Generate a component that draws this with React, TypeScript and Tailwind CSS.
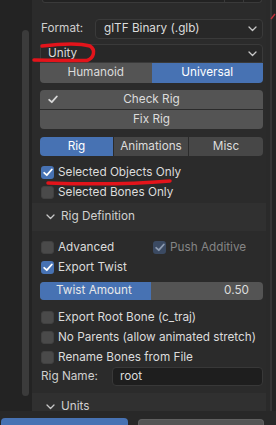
import React from 'react'

// small chevron used by dropdowns and sub-panel headers
const Chevron = ({ className = '' }: { className?: string }) => (
  <svg width="9" height="6" viewBox="0 0 9 6" className={className}>
    <path d="M1 1 L4.5 4.5 L8 1" fill="none" stroke="#c8c8c8" strokeWidth="1.3" strokeLinecap="round" strokeLinejoin="round" />
  </svg>
)

const Tick = ({ color = '#ffffff' }: { color?: string }) => (
  <svg width="10" height="9" viewBox="0 0 10 9">
    <path d="M1.2 4.8 L3.8 7.2 L8.8 1.5" fill="none" stroke={color} strokeWidth="1.8" strokeLinecap="round" strokeLinejoin="round" />
  </svg>
)

const Checkbox = ({ checked = false, dim = false }: { checked?: boolean; dim?: boolean }) => {
  if (checked && dim) {
    return (
      <span className="w-[13px] h-[13px] rounded-[3px] bg-[#3b4a62] flex items-center justify-center shrink-0">
        <Tick color="#8d9bb0" />
      </span>
    )
  }
  if (checked) {
    return (
      <span className="w-[13px] h-[13px] rounded-[3px] bg-[#4772b3] flex items-center justify-center shrink-0">
        <Tick />
      </span>
    )
  }
  return <span className="w-[13px] h-[13px] rounded-[3px] bg-[#4a4a4a] border border-[#414141] shrink-0" />
}

const CheckRow = ({ label, checked = false }: { label: string; checked?: boolean }) => (
  <div className="h-[20px] flex items-center gap-[4px] pl-[1px]">
    <Checkbox checked={checked} />
    <span className="text-[11.75px] text-[#dcdcdc] pt-[1px]">{label}</span>
  </div>
)

const SubHeader = ({ label }: { label: string }) => (
  <div className="h-[28px] bg-[#303030] flex items-center pl-[14px] gap-[6px] shrink-0">
    <Chevron />
    <span className="text-[11.75px] text-[#d0d0d0]">{label}</span>
  </div>
)

export default function App() {
  return (
    <div
      className="relative w-[276px] h-[425px] overflow-hidden bg-[#232323] flex flex-col"
      style={{ fontFamily: 'Inter, "Noto Sans", sans-serif' }}
    >
      <div className="flex h-[411px]">
        {/* left strip with scrollbar */}
        <div className="w-[32px] shrink-0 pl-[22px]">
          <div className="w-[7px] h-[366px] mt-[30px] rounded-full bg-[#3b3b3b]" />
        </div>

        {/* main panel */}
        <div className="w-[234px] shrink-0 bg-[#2b2b2b] flex flex-col">
          <div className="pl-[8px] pr-[3px] flex flex-col">
            {/* end of widget above */}
            <div className="ml-[2px] w-[220px] h-[3px] bg-[#222222] border-x border-b border-[#3a3a3a] rounded-b-[3px] flex">
              <div className="w-[182px] border-r border-[#3a3a3a]" />
              <div className="w-[19px] border-r border-[#3a3a3a]" />
            </div>

            {/* format */}
            <div className="mt-[16px] h-[20px] flex items-center">
              <span className="w-[55px] pl-[1px] text-[11.75px] text-[#cfcfcf]">Format:</span>
              <div className="flex-1 h-[20px] bg-[#282828] border border-[#3a3a3a] rounded-[4px] flex items-center justify-between pl-[8px] pr-[5px]">
                <span className="text-[11.75px] text-[#dcdcdc]">glTF Binary (.glb)</span>
                <Chevron />
              </div>
            </div>

            {/* preset */}
            <div className="mt-[5px] h-[19px] bg-[#282828] border border-[#3a3a3a] rounded-t-[4px] flex items-center justify-between pl-[7px] pr-[5px]">
              <span className="text-[11.75px] text-[#dcdcdc]">Unity</span>
              <Chevron />
            </div>
            <div className="h-[20px] flex text-[11.75px]">
              <div className="flex-1 bg-[#545454] rounded-bl-[4px] flex items-center justify-center text-[#dcdcdc]">Humanoid</div>
              <div className="flex-1 bg-[#4772b3] rounded-br-[4px] flex items-center justify-center text-white">Universal</div>
            </div>

            {/* rig checks */}
            <div className="mt-[7px] flex flex-col gap-[1px] text-[11.75px] text-[#dcdcdc]">
              <div className="relative h-[19px] bg-[#545454] rounded-t-[4px] flex items-center justify-center">
                <span className="absolute left-[8px] top-[5px]"><Tick color="#d8d8d8" /></span>
                Check Rig
              </div>
              <div className="h-[19px] bg-[#545454] rounded-b-[4px] flex items-center justify-center">Fix Rig</div>
            </div>

            {/* tabs */}
            <div className="mt-[8px] h-[19px] flex gap-[1px] text-[11.75px] text-[#dcdcdc]">
              <div className="w-[73px] bg-[#4772b3] rounded-l-[4px] flex items-center justify-center text-white">Rig</div>
              <div className="w-[74px] bg-[#474747] flex items-center justify-center">Animations</div>
              <div className="flex-1 bg-[#474747] rounded-r-[4px] flex items-center justify-center">Misc</div>
            </div>

            <div className="mt-[6px]">
              <CheckRow label="Selected Objects Only" checked />
              <CheckRow label="Selected Bones Only" />
            </div>
          </div>

          <div className="mt-[1px]">
            <SubHeader label="Rig Definition" />
          </div>

          <div className="pl-[8px] pr-[3px] flex flex-col">
            <div className="mt-[6px] h-[20px] flex items-center">
              <div className="w-[113px] flex items-center gap-[4px] pl-[1px]">
                <Checkbox />
                <span className="text-[11.75px] text-[#dcdcdc] pt-[1px]">Advanced</span>
              </div>
              <div className="flex items-center gap-[4px]">
                <Checkbox checked dim />
                <span className="text-[11.75px] text-[#858585] pt-[1px]">Push Additive</span>
              </div>
            </div>
            <CheckRow label="Export Twist" checked />

            {/* slider */}
            <div className="mt-[5px] h-[18px] rounded-[4px] bg-[#545454] flex overflow-hidden text-[11.75px]">
              <div className="w-[111px] bg-[#4772b3] pl-[16px] flex items-center text-[#e8e8e8] whitespace-nowrap">Twist Amount</div>
              <div className="flex-1 flex items-center justify-end pr-[14px] text-[#dcdcdc]">0.50</div>
            </div>

            <div className="mt-[7px]">
              <CheckRow label="Export Root Bone (c_traj)" />
              <CheckRow label="No Parents (allow animated stretch)" />
              <CheckRow label="Rename Bones from File" />
            </div>

            {/* rig name */}
            <div className="h-[19px] flex items-center">
              <span className="w-[72px] pl-[1px] text-[11.75px] text-[#cfcfcf]">Rig Name:</span>
              <div className="flex-1 h-[19px] bg-[#1e1e1e] border border-[#383838] rounded-[4px] flex items-center pl-[7px]">
                <span className="text-[11.75px] text-[#dcdcdc]">root</span>
              </div>
            </div>
          </div>

          <div className="mt-[7px]">
            <SubHeader label="Units" />
          </div>
        </div>

        {/* right strip */}
        <div className="flex-1 flex">
          <div className="w-[4px] bg-[#2a2a2a]" />
          <div className="w-[2px] bg-[#353535]" />
        </div>
      </div>

      {/* bottom buttons */}
      <div className="flex-1 bg-[#282828] flex items-end gap-[10px]">
        <div className="w-[127px] h-[7px] bg-[#4772b3] rounded-t-[4px] ml-[1px]" />
        <div className="w-[126px] h-[6px] bg-[#545454] border-x border-t border-[#606060] rounded-t-[4px]" />
      </div>

      {/* red hand-drawn annotations */}
      <svg className="absolute left-0 top-0 pointer-events-none" width="276" height="425" viewBox="0 0 276 425">
        <path
          d="M42 46 C58 44 80 43 90 46 C96 50 94 58 87 60.5 C70 61 50 60 34 60"
          fill="none"
          stroke="#e3141b"
          strokeWidth="3.5"
          strokeLinecap="round"
        />
        <path d="M48 183 C90 184.5 140 183.5 170 181" fill="none" stroke="#e3141b" strokeWidth="3.5" strokeLinecap="round" />
        <path d="M271 19 L275 14" fill="none" stroke="#c0303a" strokeWidth="1.5" />
      </svg>
    </div>
  )
}
